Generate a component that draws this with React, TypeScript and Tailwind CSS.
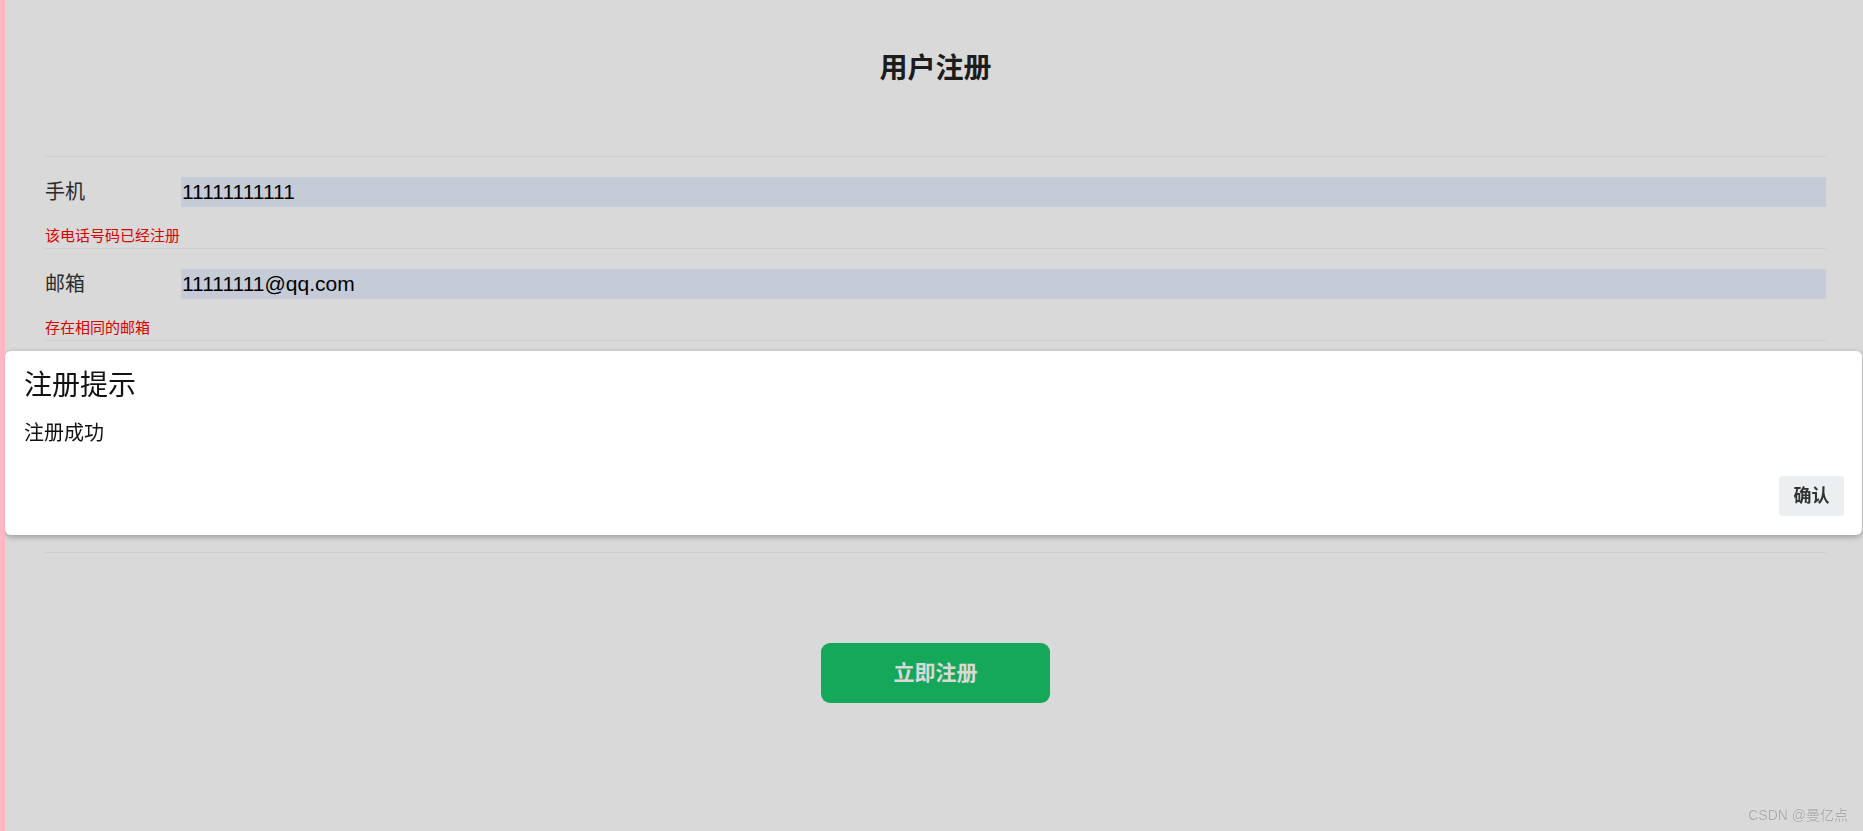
const font = { fontFamily: '"Liberation Sans", "Noto Sans CJK SC", sans-serif' };

type RowProps = {
  label?: string;
  value?: string;
  error?: string;
  tall?: boolean;
  last?: boolean;
};

const FormRow = ({ label, value, error, tall, last }: RowProps) => {
  return (
    <div
      className={`border-t border-[#f2f2f2] pt-[20px] ${tall ? "h-[106px]" : "h-[92px]"} ${
        last ? "border-b h-[107px]" : ""
      }`}
    >
      {label && (
        <div className="flex items-center h-[30px]">
          <label className="w-[136px] shrink-0 text-[20px] text-[#333]">{label}</label>
          <input
            readOnly
            defaultValue={value}
            className="flex-1 h-[30px] bg-[#e8f0fe] text-[21px] text-black pl-[1px] outline-none border-0"
          />
        </div>
      )}
      {error && (
        <p className="mt-[19px] h-[20px] leading-[20px] text-[15px] text-[#ff0000]">{error}</p>
      )}
    </div>
  );
};

export default function App() {
  return (
    <div className="relative flex min-h-[831px] bg-white" style={font}>
      <div className="relative z-30 w-[5px] shrink-0 bg-[#ffb7c5]" />

      <main className="flex-1 pl-[40px] pr-[37px] pt-[48px]">
        <h1 className="h-[42px] leading-[42px] mb-[66px] text-center text-[28px] font-bold text-[#222]">
          用户注册
        </h1>

        <FormRow label="手机" value="11111111111" error="该电话号码已经注册" />
        <FormRow label="邮箱" value="11111111@qq.com" error="存在相同的邮箱" />
        {/* rows hidden behind the dialog */}
        <FormRow tall />
        <FormRow tall last />

        <div className="flex justify-center mt-[90px]">
          <button className="w-[229px] h-[60px] rounded-[9px] bg-[#19c66a] text-white text-[21px] font-bold">
            立即注册
          </button>
        </div>
      </main>

      {/* dim layer behind the dialog */}
      <div className="fixed inset-0 z-10 bg-black/15" />

      <div className="fixed z-20 left-[5px] right-[1px] top-[351px] h-[184px] bg-white rounded-[6px] shadow-[0_2px_6px_rgba(0,0,0,0.3)] flex flex-col pl-[19px] pr-[18px] pt-[18px] pb-[19px]">
        <h2 className="text-[28px] leading-[34px] text-[#111]">注册提示</h2>
        <p className="mt-[16px] text-[20px] leading-[28px] text-[#111]">注册成功</p>
        <div className="mt-auto flex justify-end">
          <button className="w-[65px] h-[40px] rounded-[4px] bg-[#eceff1] text-[18px] font-bold text-[#333]">
            确认
          </button>
        </div>
      </div>

      <div className="fixed z-30 right-[15px] bottom-[6px] text-[14px] leading-[20px] text-[#a8a8a8] [text-shadow:0_0_1px_#fff]">
        CSDN @曼亿点
      </div>
    </div>
  );
}
